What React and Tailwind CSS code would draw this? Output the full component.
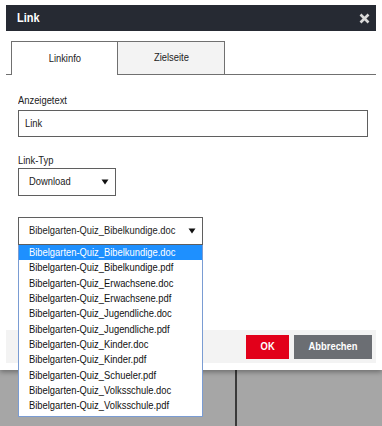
const files = [
  "Bibelgarten-Quiz_Bibelkundige.doc",
  "Bibelgarten-Quiz_Bibelkundige.pdf",
  "Bibelgarten-Quiz_Erwachsene.doc",
  "Bibelgarten-Quiz_Erwachsene.pdf",
  "Bibelgarten-Quiz_Jugendliche.doc",
  "Bibelgarten-Quiz_Jugendliche.pdf",
  "Bibelgarten-Quiz_Kinder.doc",
  "Bibelgarten-Quiz_Kinder.pdf",
  "Bibelgarten-Quiz_Schueler.pdf",
  "Bibelgarten-Quiz_Volksschule.doc",
  "Bibelgarten-Quiz_Volksschule.pdf",
];

function T({ children }) {
  return <span className="inline-block whitespace-nowrap scale-x-[0.815] origin-left">{children}</span>;
}

function C({ children }) {
  return <span className="inline-block whitespace-nowrap scale-x-[0.815] origin-center">{children}</span>;
}

function Arrow() {
  return (
    <svg width="8" height="8" viewBox="0 0 8 8" className="shrink-0">
      <path d="M0.5 1.5H7.5L4 6.5Z" fill="#111" />
    </svg>
  );
}

export default function App() {
  return (
    <div className="relative w-[382px] h-[426px] overflow-hidden bg-[#a6a6a6] flex flex-col font-['Liberation_Sans',Arial,sans-serif] text-[11.5px] text-[#222]">
      <div className="relative z-10 h-[370px] shrink-0 bg-white flex flex-col pt-[5px] px-[6px] shadow-[0_2px_5px_rgba(0,0,0,0.35)]">
        <div className="h-[26px] shrink-0 bg-[#262a33] flex items-center justify-between pl-[11px] pr-[6px]">
          <span className="text-white font-bold text-[13.5px] leading-none">
            <T>Link</T>
          </span>
          <svg width="11" height="11" viewBox="0 0 11 11">
            <path d="M1.5 1.5L9.5 9.5M9.5 1.5L1.5 9.5" stroke="#d9d9d9" strokeWidth="2.6" />
          </svg>
        </div>

        <div className="mt-[10px] flex h-[34px] shrink-0">
          <div className="w-[5px] border-b border-[#707070]" />
          <div className="w-[107px] border border-b-0 border-[#707070] flex items-center justify-center">
            <C>Linkinfo</C>
          </div>
          <div className="w-[107px] border border-l-0 border-[#707070] bg-[#f3f3f3] flex items-center justify-center">
            <C>Zielseite</C>
          </div>
          <div className="flex-1 border-b border-[#707070]" />
        </div>

        <div className="flex flex-col pl-[12px] pr-[8px]">
          <div className="mt-[17px] h-[16px] leading-[16px]">
            <T>Anzeigetext</T>
          </div>
          <div className="mt-[2px] h-[27px] border border-[#5f5f5f] flex items-center pl-[6px]">
            <T>Link</T>
          </div>

          <div className="mt-[15px] h-[16px] leading-[16px]">
            <T>Link-Typ</T>
          </div>
          <div className="w-[98px] h-[28px] border border-[#5f5f5f] flex items-center pl-[10px] pr-[6px]">
            <div className="flex-1 min-w-0">
              <T>Download</T>
            </div>
            <Arrow />
          </div>

          <div className="relative mt-[21px] w-[185px]">
            <div className="h-[28px] border border-[#5f5f5f] flex items-center pl-[10px] pr-[6px]">
              <div className="flex-1 min-w-0">
                <T>Bibelgarten-Quiz_Bibelkundige.doc</T>
              </div>
              <Arrow />
            </div>
            <div className="absolute z-20 left-0 top-full w-[185px] bg-white border border-t-0 border-[#7a9cd3] pb-[2px]">
              {files.map((f, i) => (
                <div
                  key={f}
                  className={
                    i === 0
                      ? "h-[15.33px] leading-[15.33px] pl-[10px] overflow-hidden bg-[#1e90ff] text-white"
                      : "h-[15.33px] leading-[15.33px] pl-[10px] overflow-hidden text-[#111]"
                  }
                >
                  <T>{f}</T>
                </div>
              ))}
            </div>
          </div>
        </div>

        <div className="mt-auto mb-[7px] h-[33px] shrink-0 bg-[#f3f3f3] flex items-center justify-end gap-[5px] pr-[4px]">
          <div className="w-[43px] h-[24px] bg-[#e2001a] text-white font-bold flex items-center justify-center">
            <C>OK</C>
          </div>
          <div className="w-[78px] h-[24px] bg-[#6b6e73] text-white font-bold flex items-center justify-center">
            <C>Abbrechen</C>
          </div>
        </div>
      </div>

      <div className="flex-1 flex">
        <div className="w-[235px]" />
        <div className="w-[2px] bg-[#3a3a3a]" />
      </div>
    </div>
  );
}
